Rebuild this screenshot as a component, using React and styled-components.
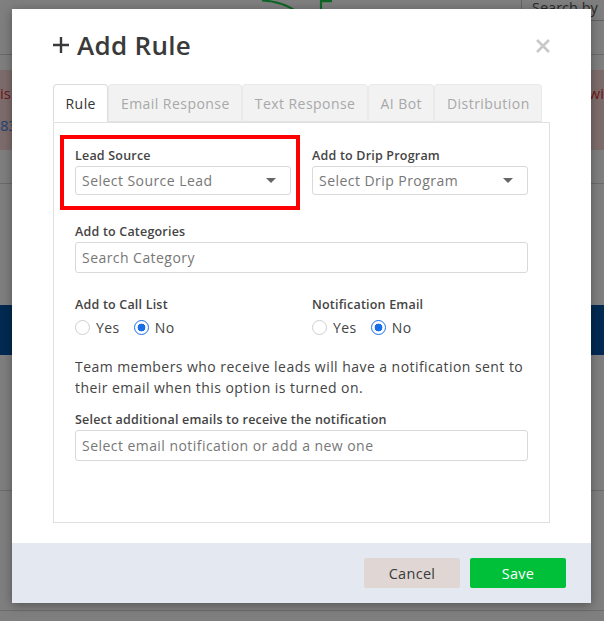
import React from "react";
import styled, { createGlobalStyle } from "styled-components";

const GlobalStyle = createGlobalStyle`
  html, body { margin: 0; padding: 0; }
  body {
    font-family: "Open Sans", "Liberation Sans", sans-serif;
    color: #333;
    -webkit-font-smoothing: antialiased;
  }
  * { box-sizing: border-box; }
`;

/* ---------- page behind the dialog ---------- */

const Page = styled.div`
  position: relative;
  width: 604px;
  height: 621px;
  overflow: hidden;
  background: #fff;
`;

const TopBar = styled.header`
  position: relative;
  height: 55px;
  border-bottom: 1px solid #d4d4d4;
  display: flex;
  justify-content: flex-end;
`;

const Logo = styled.svg`
  position: absolute;
  left: 255px;
  top: 0;
`;

const SearchBox = styled.div`
  width: 83px;
  height: 21px;
  border-left: 1px solid #c9c9c9;
  border-bottom: 1px solid #c9c9c9;
  padding-left: 10px;
  font-size: 14.5px;
  line-height: 16px;
  color: #555;
  white-space: nowrap;
`;

const Alert = styled.div`
  margin-top: 15px;
  height: 80px;
  background: #fad9d9;
  display: flex;
  justify-content: space-between;
  padding: 13px 0 0;
  font-size: 15px;
`;

const AlertCol = styled.div`
  display: flex;
  flex-direction: column;
  gap: 12px;
  color: ${(p) => p.$color || "#d33"};
`;

const AlertLink = styled.span`
  color: #3a8be8;
`;

const Rule = styled.div`
  margin-top: ${(p) => p.$gap}px;
  border-top: 1px solid #d6d6d6;
`;

const Banner = styled.div`
  margin-top: 121px;
  height: 50px;
  background: #0455a4;
`;

const Overlay = styled.div`
  position: absolute;
  inset: 0;
  background: rgba(0, 0, 0, 0.5);
`;

/* ---------- dialog ---------- */

const Dialog = styled.div`
  position: absolute;
  left: 12px;
  top: 9px;
  width: 579px;
  height: 594px;
  background: #fff;
  display: flex;
  flex-direction: column;
  box-shadow: 0 2px 10px rgba(0, 0, 0, 0.35);
`;

const Header = styled.div`
  display: flex;
  align-items: flex-start;
  justify-content: space-between;
  padding: 21px 40px 0 41px;
  height: 75px;
`;

const Title = styled.h2`
  margin: 0;
  font-size: 26px;
  line-height: 30px;
  font-weight: 600;
  color: #3a3a3a;
  display: flex;
  align-items: center;
  gap: 8px;
  letter-spacing: 0.3px;
`;

const CloseButton = styled.button`
  border: 0;
  background: none;
  padding: 0;
  margin-top: 8px;
  width: 16px;
  height: 16px;
  cursor: pointer;
  display: flex;
`;

const Body = styled.div`
  flex: 1;
  padding: 0 41px 20px;
  display: flex;
  flex-direction: column;
  letter-spacing: 0.45px;
`;

const TabList = styled.div`
  display: flex;
  height: 38px;
`;

const Tab = styled.div`
  padding: 0 11.5px;
  height: 38px;
  display: flex;
  align-items: center;
  font-size: 14px;
  border: 1px solid ${(p) => (p.$active ? "#dcdcdc" : "#eaeaea")};
  border-bottom: ${(p) => (p.$active ? "1px solid #fff" : "1px solid #e2e2e2")};
  border-radius: 4px 4px 0 0;
  background: ${(p) => (p.$active ? "#fff" : "#f2f2f2")};
  color: ${(p) => (p.$active ? "#333" : "#a8a8a8")};
  position: relative;
  z-index: ${(p) => (p.$active ? 1 : 0)};
  margin-bottom: -1px;
`;

const Panel = styled.div`
  flex: 1;
  border: 1px solid #e0e0e0;
  padding: 25px 21px 0;
  display: flex;
  flex-direction: column;
`;

const Grid = styled.div`
  display: grid;
  grid-template-columns: 1fr 1fr;
  column-gap: 21px;
  margin-top: ${(p) => p.$top || 0}px;
`;

const Field = styled.div`
  display: flex;
  flex-direction: column;
  position: relative;
  margin-top: ${(p) => p.$top || 0}px;
  ${(p) =>
    p.$marked &&
    `
    &::after {
      content: "";
      position: absolute;
      top: -13px;
      left: -15px;
      right: -9px;
      bottom: -15px;
      border: 4px solid #ff0000;
      pointer-events: none;
    }
  `}
`;

const Label = styled.label`
  font-size: 12.5px;
  font-weight: 600;
  color: #444;
  line-height: 16px;
  letter-spacing: 0.2px;
  margin-bottom: ${(p) => p.$gap ?? 2}px;
`;

const SelectBox = styled.div`
  height: 29px;
  border: 1px solid #d9d9d9;
  border-radius: 3px;
  display: flex;
  align-items: center;
  justify-content: space-between;
  padding: 0 14px 0 6px;
  font-size: 14px;
  color: #777;
`;

const Caret = styled.span`
  width: 0;
  height: 0;
  border-left: 5px solid transparent;
  border-right: 5px solid transparent;
  border-top: 5px solid #666;
`;

const TextInput = styled.div`
  height: 31px;
  border: 1px solid #d9d9d9;
  border-radius: 3px;
  display: flex;
  align-items: center;
  padding: 0 6px;
  font-size: 14px;
  color: #777;
`;

const RadioRow = styled.div`
  display: flex;
  align-items: center;
  gap: 14px;
  height: 20px;
  margin-top: 2px;
`;

const RadioOption = styled.span`
  display: flex;
  align-items: center;
  gap: 6px;
  font-size: 14px;
  color: #444;
`;

const RadioDot = styled.span`
  width: 15px;
  height: 15px;
  border-radius: 50%;
  border: ${(p) => (p.$on ? "1.5px solid #1a6fe8" : "1px solid #cfcfcf")};
  background: ${(p) =>
    p.$on ? "radial-gradient(circle, #1a6fe8 0 3.6px, #fff 4.2px)" : "#fff"};
`;

const Note = styled.p`
  margin: 19px 0 0;
  font-size: 14px;
  line-height: 21px;
  color: #444;
`;

const Footer = styled.div`
  height: 60px;
  background: #e4e8f0;
  display: flex;
  align-items: center;
  justify-content: flex-end;
  gap: 10px;
  padding-right: 25px;
`;

const Button = styled.button`
  width: 96px;
  height: 30px;
  border: 0;
  border-radius: 2px;
  font-family: inherit;
  font-size: 14.5px;
  letter-spacing: 0.3px;
  background: ${(p) => (p.$primary ? "#00bf39" : "#e0d7d5")};
  color: ${(p) => (p.$primary ? "#fff" : "#3a3a3a")};
  cursor: pointer;
`;

function Radio({ on, children }) {
  return (
    <RadioOption>
      <RadioDot $on={on} />
      {children}
    </RadioOption>
  );
}

function YesNo() {
  return (
    <RadioRow>
      <Radio>Yes</Radio>
      <Radio on>No</Radio>
    </RadioRow>
  );
}

const tabs = ["Rule", "Email Response", "Text Response", "AI Bot", "Distribution"];

export default function App() {
  return (
    <>
      <GlobalStyle />
      <Page>
        <TopBar>
          <Logo width="90" height="14" viewBox="0 0 90 14">
            <path
              d="M7 0.5 Q28 1.5 42 12"
              fill="none"
              stroke="#1fcf4f"
              strokeWidth="2.2"
            />
            <path d="M66 13 V1.2 H77" fill="none" stroke="#1fcf4f" strokeWidth="2.2" />
          </Logo>
          <SearchBox>Search by</SearchBox>
        </TopBar>
        <Alert>
          <AlertCol>
            <span>is</span>
            <AlertLink>83</AlertLink>
          </AlertCol>
          <AlertCol>
            <span>wi</span>
          </AlertCol>
        </Alert>
        <Rule $gap={33} />
        <Banner />
        <Rule $gap={135} />
        <Rule $gap={119} />
        <Overlay />

        <Dialog>
          <Header>
            <Title>
              <svg width="16" height="16" viewBox="0 0 16 16">
                <path d="M8 0 V16 M0 8 H16" stroke="#3a3a3a" strokeWidth="2.4" />
              </svg>
              Add Rule
            </Title>
            <CloseButton aria-label="Close">
              <svg width="16" height="16" viewBox="0 0 16 16">
                <path d="M2 2 L14 14 M14 2 L2 14" stroke="#c8c8c8" strokeWidth="2.6" />
              </svg>
            </CloseButton>
          </Header>

          <Body>
            <TabList>
              {tabs.map((t, i) => (
                <Tab key={t} $active={i === 0}>
                  {t}
                </Tab>
              ))}
            </TabList>
            <Panel>
              <Grid>
                <Field $marked>
                  <Label>Lead Source</Label>
                  <SelectBox>
                    Select Source Lead
                    <Caret />
                  </SelectBox>
                </Field>
                <Field>
                  <Label>Add to Drip Program</Label>
                  <SelectBox>
                    Select Drip Program
                    <Caret />
                  </SelectBox>
                </Field>
              </Grid>

              <Field $top={29}>
                <Label $gap={2}>Add to Categories</Label>
                <TextInput>Search Category</TextInput>
              </Field>

              <Grid $top={24}>
                <Field>
                  <Label>Add to Call List</Label>
                  <YesNo />
                </Field>
                <Field>
                  <Label>Notification Email</Label>
                  <YesNo />
                </Field>
              </Grid>

              <Note>
                Team members who receive leads will have a notification sent to
                their email when this option is turned on.
              </Note>

              <Field $top={14}>
                <Label $gap={2}>Select additional emails to receive the notification</Label>
                <TextInput>Select email notification or add a new one</TextInput>
              </Field>
            </Panel>
          </Body>

          <Footer>
            <Button>Cancel</Button>
            <Button $primary>Save</Button>
          </Footer>
        </Dialog>
      </Page>
    </>
  );
}
